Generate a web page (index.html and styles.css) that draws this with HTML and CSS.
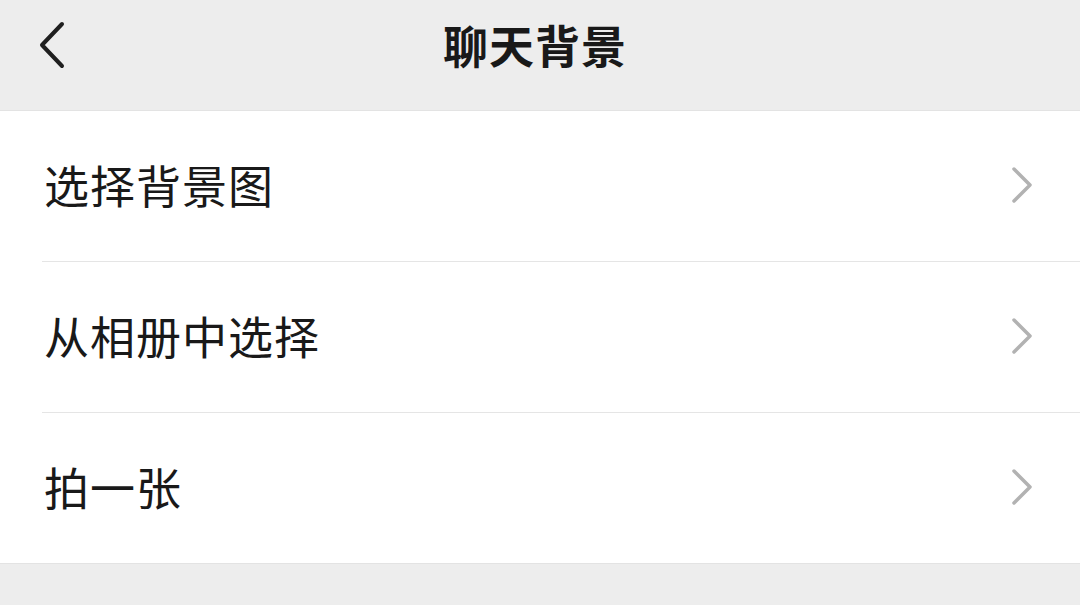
FILE: index.html
```html
<!DOCTYPE html>
<html lang="zh-CN">
<head>
    <meta charset="UTF-8">
    <meta name="viewport" content="width=device-width, initial-scale=1.0">
    <title>聊天背景</title>
    <link rel="stylesheet" href="styles.css">
</head>
<body>

<div class="header">
    <div class="back">
        <svg width="36" height="56" viewBox="0 0 36 56">
            <polyline points="24,4 4,25 24,46" fill="none" stroke="#1f1f1f" stroke-width="4" stroke-linecap="round" stroke-linejoin="round"/>
        </svg>
    </div>
    <div class="title">聊天背景</div>
</div>

<ul class="menu">
    <li class="menu-item">
        <span>选择背景图</span>
        <svg class="arrow" width="24" height="40" viewBox="0 0 24 40">
            <polyline points="4,4 20,20 4,36" fill="none" stroke="#b2b2b2" stroke-width="3.5" stroke-linecap="round" stroke-linejoin="round"/>
        </svg>
    </li>
    <li class="menu-item">
        <span>从相册中选择</span>
        <svg class="arrow" width="24" height="40" viewBox="0 0 24 40">
            <polyline points="4,4 20,20 4,36" fill="none" stroke="#b2b2b2" stroke-width="3.5" stroke-linecap="round" stroke-linejoin="round"/>
        </svg>
    </li>
    <li class="menu-item">
        <span>拍一张</span>
        <svg class="arrow" width="24" height="40" viewBox="0 0 24 40">
            <polyline points="4,4 20,20 4,36" fill="none" stroke="#b2b2b2" stroke-width="3.5" stroke-linecap="round" stroke-linejoin="round"/>
        </svg>
    </li>
</ul>

</body>
</html>
```

FILE: styles.css
```css
body {
    font-family: "Noto Sans CJK SC", "Noto Sans", sans-serif;
    background-color: #ededed;
    margin: 0;
    color: #191919;
}

.header {
    height: 110px;
    display: flex;
    align-items: center;
    justify-content: center;
    position: relative;
    border-bottom: 1px solid #e3e3e3;
}

.back {
    position: absolute;
    left: 38px;
    top: 20px;
}

.title {
    font-size: 45px;
    font-weight: bold;
    letter-spacing: 1px;
    padding-bottom: 22px;
    padding-right: 10px;
}

.menu {
    list-style: none;
    margin: 0;
    padding: 0 0 0 42px;
    background-color: #fff;
    border-bottom: 1px solid #e3e3e3;
}

.menu-item {
    height: 150px;
    display: flex;
    align-items: center;
    justify-content: space-between;
    padding-right: 46px;
    font-size: 45px;
    letter-spacing: 1px;
    border-bottom: 1px solid #e5e5e5;
}

.menu-item:last-child {
    border-bottom: none;
}

.menu-item span {
    padding-left: 2px;
    padding-bottom: 4px;
}

.arrow {
    margin-top: -2px;
}
```
